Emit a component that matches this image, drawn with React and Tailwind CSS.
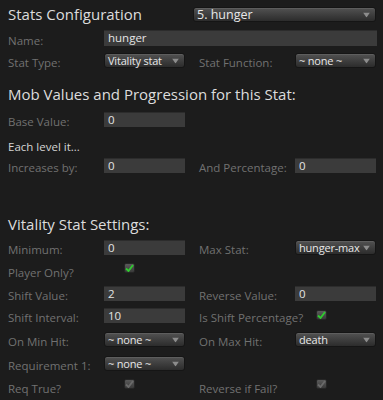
const Arrow = () => (
  <svg width="7" height="5" viewBox="0 0 7 5" className="absolute right-[5px] top-1/2 -translate-y-1/2">
    <path d="M0 0 L7 0 L3.5 5 Z" fill="#8c8c8c" />
  </svg>
);

function Select({ value, wide }) {
  return (
    <div
      className={`relative h-[15px] ${wide ? "w-[183px] text-[12.5px]" : "w-[81px] text-[11px] tracking-[-0.2px]"} rounded-[3px] border border-[#151515] bg-gradient-to-b from-[#525252] to-[#2c2c2c] leading-[13px] text-[#e8e8e8] pl-[3px] whitespace-nowrap shadow-[inset_0_1px_0_rgba(255,255,255,0.08)]`}
    >
      {value}
      <Arrow />
    </div>
  );
}

function Field({ value, wide, tall }) {
  return (
    <div
      className={`${tall ? "h-[16px]" : "h-[15px]"} ${wide ? "w-[273px]" : "w-[81px]"} bg-[#3b3b3b] border-t border-[#2c2c2c] text-[11.5px] leading-[14px] text-[#e4e4e4] pl-[4px]`}
    >
      {value}
    </div>
  );
}

function Check({ on }) {
  return (
    <div className="w-[11px] h-[10px] rounded-[2px] bg-gradient-to-b from-[#5a5a5a] to-[#3a3a3a] border border-[#262626] flex items-center justify-center">
      <svg width="9" height="8" viewBox="0 0 9 8">
        <path d="M1 4.5 L3.5 7 L8 1" stroke={on ? "#2fcc2f" : "#6a6a6a"} strokeWidth="1.8" fill="none" />
      </svg>
    </div>
  );
}

const Label = ({ children }) => (
  <div className="w-[96px] text-[11.5px] leading-[11px] text-[#717171] whitespace-nowrap">{children}</div>
);

const Heading = ({ children }) => (
  <div className="text-[15px] leading-[14px] text-[#dcdcdc] whitespace-nowrap">{children}</div>
);

export default function App() {
  return (
    <div
      className="w-[383px] h-[400px] bg-[#1c1c1c] pl-[8px] pt-[7px] overflow-hidden flex flex-col"
      style={{ fontFamily: '"Open Sans", "Noto Sans", sans-serif' }}
    >
      <div className="flex items-start">
        <div className="w-[185px]">
          <Heading>Stats Configuration</Heading>
        </div>
        <Select value="5. hunger" wide />
      </div>

      <div className="mt-[8px] flex items-end">
        <Label>Name:</Label>
        <Field value="hunger" wide tall />
      </div>

      <div className="mt-[7px] flex items-end">
        <Label>Stat Type:</Label>
        <Select value="Vitality stat" />
        <div className="w-[14px]" />
        <Label>Stat Function:</Label>
        <Select value="~ none ~" />
      </div>

      <div className="mt-[19px]">
        <Heading>Mob Values and Progression for this Stat:</Heading>
      </div>

      <div className="mt-[11px] flex items-end">
        <Label>Base Value:</Label>
        <Field value="0" />
      </div>

      <div className="mt-[14px] text-[11.5px] leading-[11px] text-[#d4d4d4]">Each level it...</div>

      <div className="mt-[6px] flex items-end">
        <Label>Increases by:</Label>
        <Field value="0" />
        <div className="w-[14px]" />
        <Label>And Percentage:</Label>
        <Field value="0" />
      </div>

      <div className="mt-[44px]">
        <Heading>Vitality Stat Settings:</Heading>
      </div>

      <div className="mt-[9px] flex items-end">
        <Label>Minimum:</Label>
        <Field value="0" />
        <div className="w-[14px]" />
        <Label>Max Stat:</Label>
        <Select value="hunger-max" />
      </div>

      <div className="mt-[8px] h-[15px] flex items-end">
        <Label>Player Only?</Label>
        <div className="self-start pl-[20px]">
          <Check on />
        </div>
      </div>

      <div className="mt-[8px] flex items-end">
        <Label>Shift Value:</Label>
        <Field value="2" />
        <div className="w-[14px]" />
        <Label>Reverse Value:</Label>
        <Field value="0" />
      </div>

      <div className="mt-[7px] flex items-end">
        <Label>Shift Interval:</Label>
        <Field value="10" />
        <div className="w-[14px]" />
        <Label>Is Shift Percentage?</Label>
        <div className="self-start h-[15px] w-[81px] pl-[21px] pt-[2px]">
          <Check on />
        </div>
      </div>

      <div className="mt-[9px] flex items-end">
        <Label>On Min Hit:</Label>
        <Select value="~ none ~" />
        <div className="w-[14px]" />
        <Label>On Max Hit:</Label>
        <Select value="death" />
      </div>

      <div className="mt-[9px] flex items-end">
        <Label>Requirement 1:</Label>
        <Select value="~ none ~" />
      </div>

      <div className="mt-[8px] h-[15px] flex items-end">
        <Label>Req True?</Label>
        <div className="self-start w-[81px] pl-[20px]">
          <Check />
        </div>
        <div className="w-[14px]" />
        <Label>Reverse if Fail?</Label>
        <div className="self-start pl-[21px]">
          <Check />
        </div>
      </div>
    </div>
  );
}
